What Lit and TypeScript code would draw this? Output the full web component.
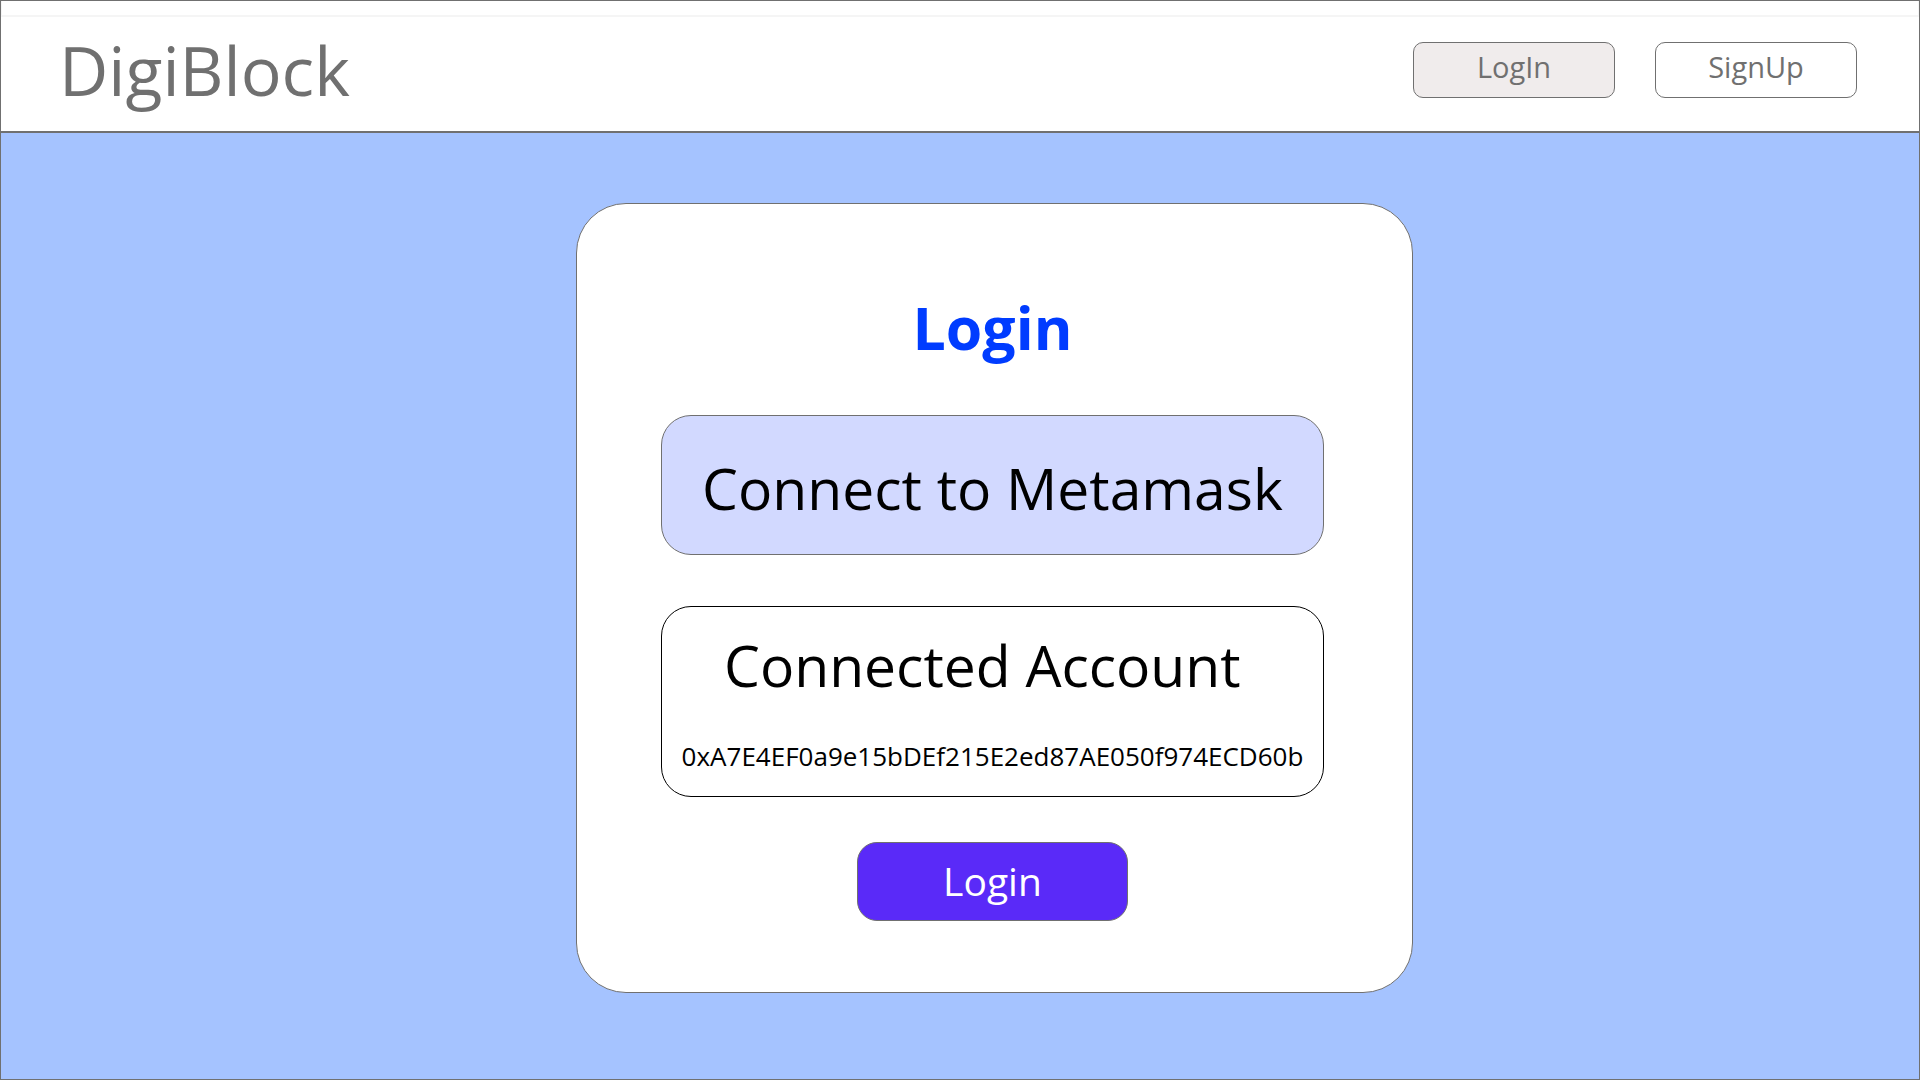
import { LitElement, html, css } from "lit";
import { customElement, property } from "lit/decorators.js";

@customElement("site-header")
class SiteHeader extends LitElement {
  static styles = css`
    :host {
      display: block;
      background: #fff;
      border-bottom: 2px solid #707070;
    }
    .strip {
      height: 14px;
      border: 1px solid #f5f5f5;
      border-top: 0;
      border-bottom-width: 2px;
    }
    .bar {
      display: flex;
      align-items: center;
      justify-content: space-between;
      min-height: 106px;
      padding: 0 62px 8px 58px;
    }
    .brand {
      color: #707070;
      font-size: 68px;
      line-height: 88px;
      text-decoration: none;
    }
    .nav {
      display: flex;
      gap: 40px;
    }
    .tab {
      box-sizing: border-box;
      width: 202px;
      padding: 6px 8px 12px;
      border: 1px solid #707070;
      border-radius: 10px;
      background: #fff;
      color: #707070;
      font: inherit;
      font-size: 29px;
      line-height: 36px;
      cursor: pointer;
    }
    .tab[aria-pressed="true"] {
      background: #f0ecec;
    }
  `;

  render() {
    return html`
      <div class="strip"></div>
      <div class="bar">
        <a class="brand" href="#">DigiBlock</a>
        <nav class="nav">
          <button class="tab" type="button" aria-pressed="true">LogIn</button>
          <button class="tab" type="button" aria-pressed="false">SignUp</button>
        </nav>
      </div>
    `;
  }
}

@customElement("login-card")
class LoginCard extends LitElement {
  @property() account = "";

  static styles = css`
    :host {
      display: flex;
      flex-direction: column;
      box-sizing: border-box;
      width: 100%;
      max-width: 837px;
      padding: 87px 88px 71px 84px;
      border: 1px solid #707070;
      border-radius: 50px;
      background: #fff;
      color: #000;
    }
    .title,
    .label {
      margin: 0;
      font-size: 57px;
      line-height: 72px;
    }
    .title {
      margin-bottom: 52px;
      color: #003cff;
      font-size: 59px;
      font-weight: 700;
      text-align: center;
    }
    .connect {
      padding: 36px 8px 30px;
      border: 1px solid #707070;
      border-radius: 30px;
      background: #d2d9ff;
      color: inherit;
      font: inherit;
      font-size: 57px;
      line-height: 72px;
      white-space: nowrap;
      cursor: pointer;
    }
    .account {
      margin-top: 51px;
      padding: 22px 16px;
      border: 1px solid #000;
      border-radius: 30px;
    }
    .label {
      padding-left: 46px;
      font-weight: 400;
      white-space: nowrap;
    }
    .address {
      margin: 38px 0 0;
      font-size: 26px;
      line-height: 35px;
      text-align: center;
      white-space: nowrap;
    }
    .submit {
      align-self: center;
      width: 271px;
      margin-top: 45px;
      padding: 12px 8px 13px;
      border: 1px solid #707070;
      border-radius: 20px;
      background: #5a2af8;
      color: #fff;
      font: inherit;
      font-size: 39px;
      line-height: 52px;
      cursor: pointer;
    }
  `;

  render() {
    return html`
      <h1 class="title">Login</h1>
      <button class="connect" type="button">Connect to Metamask</button>
      <section class="account">
        <h2 class="label">Connected Account</h2>
        <p class="address">${this.account}</p>
      </section>
      <button class="submit" type="button">Login</button>
    `;
  }
}

@customElement("app-root")
class AppRoot extends LitElement {
  static styles = css`
    :host {
      display: flex;
      flex-direction: column;
      box-sizing: border-box;
      min-height: 100vh;
      border: 1px solid #707070;
      background: #a5c3ff;
      font-family: "Open Sans", "Noto Sans", sans-serif;
    }
    .main {
      display: flex;
      flex: 1;
      align-items: flex-start;
      justify-content: center;
      padding: 70px 0 70px 69px;
    }
  `;

  render() {
    return html`
      <site-header></site-header>
      <main class="main">
        <login-card account="0xA7E4EF0a9e15bDEf215E2ed87AE050f974ECD60b"></login-card>
      </main>
    `;
  }
}
